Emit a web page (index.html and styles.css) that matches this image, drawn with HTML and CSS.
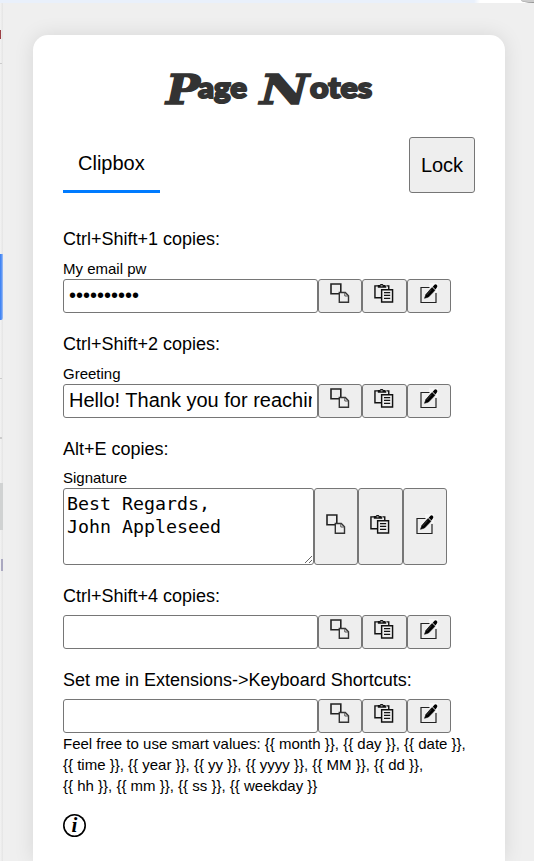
FILE: index.html
```html
<!DOCTYPE html>
<html lang="en">
<head>
<meta charset="utf-8">
<title>Page Notes</title>
<link rel="stylesheet" href="styles.css">
</head>
<body>
<svg class="symbols" aria-hidden="true">
  <symbol id="copy" viewBox="0 0 20 21">
    <path d="M1 1H10.800V10.800H1Z" fill="none" stroke="#222" stroke-width="1.6"/>
    <path d="M9.300 9.500H15.300L18.500 12.700V19.300H9.300Z" fill="#eee" stroke="#333" stroke-width="1.4"/>
    <path d="M14.800 9.500V13H18.500" fill="none" stroke="#555" stroke-width="1"/>
  </symbol>
  <symbol id="paste" viewBox="0 0 21 21">
    <path d="M6 2.500H1V15H7.500M13 2.500H15.500V6" fill="none" stroke="#111" stroke-width="1.5"/>
    <path d="M4 1.500H6L7 .5H9L10 1.500H12L13 4.500H4Z" fill="#111"/>
    <path d="M7 2.500H9" stroke="#ddd"/>
    <path d="M8 6.500H19.500V19.500H8Z" fill="#eee" stroke="#111" stroke-width="1.5"/>
    <path d="M10.500 9.500H17M10.500 12.500H17M10.500 15.500H17" stroke="#111" stroke-width="1.3"/>
  </symbol>
  <symbol id="edit" viewBox="0 0 20 21">
    <path d="M10 0H19V9H14V6H10Z" fill="#f7f7f7"/>
    <path d="M10.500 4.500H2V19.500H17V10" fill="none" stroke="#222" stroke-width="1.2"/>
    <path d="M5.500 15.300L7 11.300L13 4.500L16 7.300L9.500 14Z" fill="#000" stroke="#000" stroke-width=".6"/>
    <path d="M13.700 3.800L15.500 1.700Q16.500 .8 17.700 1.800Q19 3 18 4.200L16.500 6.500Z" fill="#000"/>
    <path d="M7.700 12L12.500 6.700" stroke="#777" stroke-width=".5"/>
  </symbol>
</svg>

<div class="backdrop" aria-hidden="true">
  <i class="toolbar"></i><i class="avatar"></i><i class="edge"></i>
  <i class="sliver red"></i><i class="sliver line-a"></i><i class="sliver blue"></i>
  <i class="sliver line-b"></i><i class="sliver line-c"></i><i class="sliver grey"></i><i class="sliver mark"></i>
</div>

<main class="card">
  <h1 class="title">
    <svg viewBox="0 0 214 48" role="img" aria-label="Page Notes">
      <text class="cap" x="4" y="39" textLength="34" lengthAdjust="spacingAndGlyphs">P</text>
      <text class="rest" x="36" y="32.500" textLength="49" lengthAdjust="spacingAndGlyphs">age</text>
      <text class="cap" x="98" y="38.500" textLength="49" lengthAdjust="spacingAndGlyphs">N</text>
      <text class="rest" x="148" y="32.500" textLength="62" lengthAdjust="spacingAndGlyphs">otes</text>
    </svg>
  </h1>
  <header class="bar">
    <div class="tab">Clipbox</div>
    <button class="lock">Lock</button>
  </header>

  <section class="clip">
    <h2>Ctrl+Shift+1 copies:</h2>
    <div class="name">My email pw</div>
    <div class="row">
      <input type="password" value="aaaaaaaaaa">
      <button><svg><use href="#copy"/></svg></button>
      <button><svg><use href="#paste"/></svg></button>
      <button><svg><use href="#edit"/></svg></button>
    </div>
  </section>

  <section class="clip">
    <h2>Ctrl+Shift+2 copies:</h2>
    <div class="name">Greeting</div>
    <div class="row">
      <input type="text" value="Hello! Thank you for reaching out">
      <button><svg><use href="#copy"/></svg></button>
      <button><svg><use href="#paste"/></svg></button>
      <button><svg><use href="#edit"/></svg></button>
    </div>
  </section>

  <section class="clip multi">
    <h2>Alt+E copies:</h2>
    <div class="name">Signature</div>
    <div class="row tall">
      <textarea spellcheck="false">Best Regards,
John Appleseed</textarea>
      <button><svg><use href="#copy"/></svg></button>
      <button><svg><use href="#paste"/></svg></button>
      <button><svg><use href="#edit"/></svg></button>
    </div>
  </section>

  <section class="clip">
    <h2>Ctrl+Shift+4 copies:</h2>
    <div class="row">
      <input type="text">
      <button><svg><use href="#copy"/></svg></button>
      <button><svg><use href="#paste"/></svg></button>
      <button><svg><use href="#edit"/></svg></button>
    </div>
  </section>

  <section class="clip">
    <h2>Set me in Extensions-&gt;Keyboard Shortcuts:</h2>
    <div class="row">
      <input type="text">
      <button><svg><use href="#copy"/></svg></button>
      <button><svg><use href="#paste"/></svg></button>
      <button><svg><use href="#edit"/></svg></button>
    </div>
  </section>

  <p class="hint">Feel free to use smart values: {{ month }}, {{ day }}, {{ date }},<br>{{ time }}, {{ year }}, {{ yy }}, {{ yyyy }}, {{ MM }}, {{ dd }},<br>{{ hh }}, {{ mm }}, {{ ss }}, {{ weekday }}</p>
  <div class="info">i</div>
</main>
</body>
</html>
```
FILE: styles.css
```css
* { box-sizing: border-box; }
html { height: 100%; overflow: hidden; background: #efefef; }
body {
  margin: 0;
  height: 861px;
  overflow: hidden;
  padding: 35px 29px 0 33px;
  font-family: "Liberation Sans", Arial, sans-serif;
  color: #000;
}
.symbols { position: absolute; width: 0; height: 0; }

.card {
  height: 826px;
  padding: 30px 30px 0;
  background: #fff;
  border-radius: 15px 15px 0 0;
  box-shadow: 0 0 20px rgba(0, 0, 0, .1);
}

.title {
  display: flex;
  justify-content: center;
  height: 72px;
  margin: 0;
}
.title svg { width: 214px; height: 48px; overflow: visible; }
.title text { fill: #333; stroke: #333; }
.cap { font: italic 900 41px "DejaVu Serif", serif; stroke-width: 1.4px; }
.rest { font: 900 29px Lato, sans-serif; stroke-width: 2px; }

.bar { display: flex; justify-content: space-between; height: 56px; margin-bottom: 36px; }
.tab {
  width: 97px;
  padding: 0 15px;
  font-size: 20px;
  line-height: 53px;
  border-bottom: 3px solid #007bff;
}
button {
  padding: 0;
  border: 1px solid #767676;
  border-radius: 3px;
  background: #eee;
  color: #000;
  font: 20px "Liberation Sans", Arial, sans-serif;
}
.lock { width: 66px; height: 56px; }

.clip { margin-bottom: 21px; }
.clip h2 { margin: 0 0 8px; font-size: 18px; font-weight: 400; line-height: 21px; }
.multi h2 { margin-bottom: 7px; }
.name { font-size: 15px; line-height: 21px; }
.row { display: flex; height: 34px; }
.row button {
  display: flex;
  justify-content: center;
  align-items: flex-start;
  width: 44.33px;
  padding-top: 3px;
}
.row svg { display: block; width: 20px; height: 21px; }
.row input {
  width: 255px;
  padding: 0 5px 2px;
  border: 1px solid #767676;
  border-radius: 3px;
  font: 20px "Liberation Sans", Arial, sans-serif;
}
.row.tall { height: 77px; }
.tall button { align-items: center; padding: 0 0 4px; }
textarea {
  width: 251px;
  margin: 0;
  padding: 3px;
  border: 1px solid #767676;
  border-radius: 3px;
  font: 18.27px/23px "DejaVu Sans Mono", monospace;
}
.hint { margin: -21px 0 18px; font-size: 15px; line-height: 21px; white-space: nowrap; }
.info {
  width: 23px;
  height: 23px;
  border-radius: 50%;
  box-shadow: inset 0 0 0 1.6px #000;
  text-align: center;
  font: italic 700 21px/22px "Liberation Serif", serif;
}

/* Parts of the browser window that show around the popup */
.backdrop i { position: absolute; }
.toolbar { left: 0; top: 0; width: 534px; height: 3px; background: linear-gradient(90deg, #e9f0fb 474px, #fff 480px); }
.avatar { right: 0; top: 0; width: 13px; height: 3px; background: #ccc; border-bottom: 1px solid #999; border-bottom-left-radius: 12px 3px; }
.edge { left: 0; top: 3px; width: 3px; height: 858px; background: linear-gradient(90deg, #f3f3f3, #e4e4e4); }
.sliver { left: 0; width: 2px; }
.red { top: 30px; height: 9px; width: 1px; background: #9c4045; }
.line-a { top: 63px; height: 1px; background: #ccc; }
.blue { top: 254px; height: 66px; width: 3px; background: linear-gradient(90deg, #4285f4 1px, #a8c4f4); border-radius: 0 0 2px 0; }
.line-b { top: 378px; height: 1px; background: #ccc; }
.line-c { top: 437px; height: 2px; background: #ccc; }
.grey { top: 483px; height: 47px; width: 3px; background: #d0d2d2; }
.mark { top: 559px; height: 12px; left: 1px; background: #aaa8c0; }
```
